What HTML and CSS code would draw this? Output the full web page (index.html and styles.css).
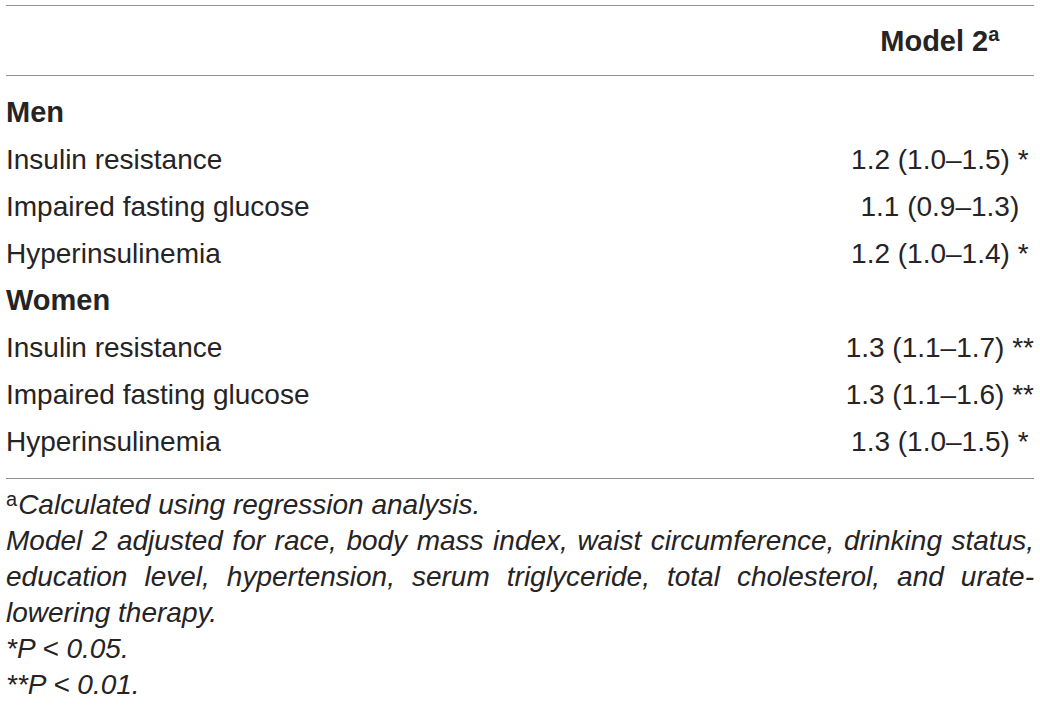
FILE: index.html
```html
<!DOCTYPE html>
<html>
<head>
<meta charset="utf-8">
<link rel="stylesheet" href="styles.css">
</head>
<body>
<div class="page">
  <table class="results">
    <thead>
      <tr>
        <th class="label-col"></th>
        <th class="val-col">Model 2<sup class="sup">a</sup></th>
      </tr>
    </thead>
    <tbody>
      <tr class="first"><td class="group">Men</td><td></td></tr>
      <tr><td>Insulin resistance</td><td class="val">1.2 (1.0–1.5) *</td></tr>
      <tr><td>Impaired fasting glucose</td><td class="val">1.1 (0.9–1.3)</td></tr>
      <tr><td>Hyperinsulinemia</td><td class="val">1.2 (1.0–1.4) *</td></tr>
      <tr><td class="group">Women</td><td></td></tr>
      <tr><td>Insulin resistance</td><td class="val">1.3 (1.1–1.7) **</td></tr>
      <tr><td>Impaired fasting glucose</td><td class="val">1.3 (1.1–1.6) **</td></tr>
      <tr class="last"><td>Hyperinsulinemia</td><td class="val">1.3 (1.0–1.5) *</td></tr>
    </tbody>
  </table>
  <div class="notes">
    <p class="line"><sup class="fsup">a</sup>Calculated using regression analysis.</p>
    <p class="line jl">Model 2 adjusted for race, body mass index, waist circumference, drinking status,</p>
    <p class="line jl">education level, hypertension, serum triglyceride, total cholesterol, and urate-</p>
    <p class="line">lowering therapy.</p>
    <p class="line">*P &lt; 0.05.</p>
    <p class="line">**P &lt; 0.01.</p>
  </div>
</div>
</body>
</html>
```

FILE: styles.css
```css
html, body {
  margin: 0;
  padding: 0;
  background: #ffffff;
}

body {
  font-family: "Liberation Sans", Arial, sans-serif;
  color: #262324;
}

.page {
  padding: 5px 6px 0 6px;
  width: 1028px;
}

.results {
  width: 100%;
  border-collapse: collapse;
  font-size: 28px;
}

.results thead th {
  border-top: 1px solid #909090;
  border-bottom: 1px solid #909090;
  padding: 18px 0 17px 0;
  line-height: 34px;
  font-weight: bold;
  font-size: 29px;
}

.label-col {
  text-align: left;
}

.val-col {
  width: 186px;
  text-align: center;
}

.sup {
  font-size: 20px;
  font-weight: bold;
  vertical-align: 10px;
  line-height: 0;
}

.results td {
  padding: 0;
  height: 47px;
  line-height: 47px;
  white-space: nowrap;
}

.results tr.first td {
  padding-top: 13px;
}

.results tr.last td {
  padding-bottom: 13px;
  border-bottom: 1px solid #909090;
}

.results td.group {
  font-weight: bold;
  font-size: 29px;
}

.results td.val {
  text-align: center;
}

.notes {
  padding-top: 8px;
  font-size: 28px;
  font-style: italic;
}

.line {
  margin: 0;
  line-height: 36px;
  white-space: nowrap;
}

.jl {
  text-align: justify;
  text-align-last: justify;
}

.fsup {
  font-style: normal;
  font-size: 20px;
  vertical-align: 8px;
  line-height: 0;
  margin-right: 1px;
}
```
